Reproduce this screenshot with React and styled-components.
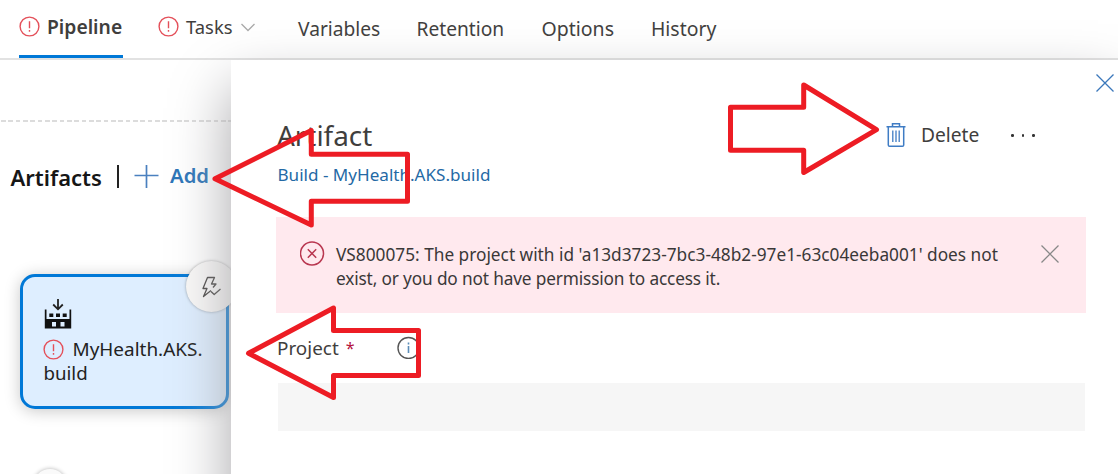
import React from 'react';
import styled, { createGlobalStyle } from 'styled-components';

const GlobalStyle = createGlobalStyle`
  * { box-sizing: border-box; }
  body { margin: 0; background: #fff; }
  svg { display: block; flex: none; }
`;

const Page = styled.div`
  position: relative;
  display: flex;
  flex-direction: column;
  width: 1118px;
  height: 474px;
  overflow: hidden;
  background: #fff;
  color: #3f3e3d;
  font-family: 'Noto Sans', 'Open Sans', sans-serif;
  font-size: 19px;
  line-height: 24px;
  white-space: nowrap;
`;

const TopBar = styled.nav`
  display: flex;
  height: 60px;
  flex: none;
  border-bottom: 2px solid #e2e2e2;
`;

const Tab = styled.div`
  display: flex;
  flex: none;
  height: 58px;
  width: ${(p) => p.$width}px;
  margin-left: ${(p) => p.$gap}px;
  padding-top: ${(p) => p.$top || 17}px;
  font-size: ${(p) => p.$size || 19.2}px;
  font-weight: ${(p) => (p.$active ? 600 : 400)};
  border-bottom: 3px solid ${(p) => (p.$active ? '#0078d7' : 'transparent')};
  svg { margin-top: 1px; }
  span { margin-left: 7px; }
`;

const Chevron = styled.svg`
  && { margin: 8px 0 0 8px; }
`;

const Body = styled.div`
  display: flex;
  flex: 1;
  min-height: 0;
`;

const Canvas = styled.section`
  width: 231px;
  flex: none;
  padding-top: 60px;
`;

const DashedRule = styled.div`
  height: 2px;
  margin-left: 1px;
  background: repeating-linear-gradient(90deg, #dcdcdc 0 4.6px, transparent 4.6px 7.33px);
`;

const ArtifactsHeader = styled.header`
  display: flex;
  align-items: flex-start;
  margin: 43px 0 0 10.5px;
  height: 24px;
`;

const ArtifactsTitle = styled.h2`
  margin: 0;
  width: 106px;
  font-size: 22px;
  font-weight: 600;
  color: #161616;
`;

const Divider = styled.div`
  width: 2px;
  height: 23px;
  background: #222;
`;

const AddButton = styled.div`
  display: flex;
  margin-left: 15.5px;
  font-size: 20.3px;
  font-weight: 600;
  color: #2a74b8;
  span { margin: -2px 0 0 11px; }
`;

const ArtifactCard = styled.article`
  position: relative;
  width: 209.5px;
  height: 135px;
  margin: 85px 0 0 19.5px;
  padding: 22px 0 0 21px;
  border: 3px solid #0078d7;
  border-radius: 15px;
  background: #deeeff;
  box-shadow: 0 2px 16px rgba(0, 0, 0, 0.22);
  color: #222;
`;

const ArtifactName = styled.div`
  display: flex;
  align-items: center;
  margin: 8px 0 0 -1px;
  font-size: 18.95px;
  span { margin-left: 9px; }
`;

const ArtifactNameRest = styled.div`
  font-size: 18.7px;
`;

const TriggerBadge = styled.div`
  position: absolute;
  top: -16px;
  left: 163px;
  width: 51px;
  height: 51px;
  border-radius: 50%;
  background: #faf9f8;
  box-shadow: 0 0 3px rgba(0, 0, 0, 0.35);
  display: grid;
  place-items: center;
`;

const NextBadge = styled.div`
  width: 34px;
  height: 34px;
  margin: 60px 0 0 33px;
  border-radius: 50%;
  background: #fafafa;
  box-shadow: 0 0 4px rgba(0, 0, 0, 0.3);
`;

const Panel = styled.aside`
  position: relative;
  flex: 1;
  display: flex;
  flex-direction: column;
  margin-bottom: -120px;
  padding: 14px 0 0 45px;
  background: #fff;
  box-shadow: 0 28px 56px rgb(166, 165, 168);
`;

const CloseRow = styled.div`
  display: flex;
  justify-content: flex-end;
  padding-right: 4px;
  height: 18px;
`;

const PanelHeader = styled.header`
  display: flex;
  margin-top: 26px;
  height: 35px;
`;

const PanelTitle = styled.h1`
  margin: 0 0 0 1px;
  width: 609px;
  font-size: 27.9px;
  line-height: 35px;
  font-weight: 400;
`;

const DeleteButton = styled.div`
  display: flex;
  width: 125px;
  padding-top: 5px;
  font-size: 19.2px;
  span { margin-left: 15px; }
`;

const MoreDots = styled.div`
  display: flex;
  gap: 8px;
  padding-top: 16px;
  i { width: 2.6px; height: 2.6px; border-radius: 50%; background: #333; }
`;

const BuildLink = styled.div`
  margin: 10px 0 0 1.5px;
  font-size: 17.08px;
  color: #2469a5;
`;

const Alert = styled.div`
  display: flex;
  width: 810px;
  height: 96px;
  margin-top: 30px;
  padding: 24px 27px 0 24px;
  background: #ffe9ee;
  color: #3a3838;
`;

const AlertText = styled.p`
  margin: 2px 0 0 11px;
  flex: 1;
  font-size: 17.25px;
  line-height: 24px;
`;

const AlertLine = styled.span`
  display: block;
  letter-spacing: ${(p) => p.$tracking || 0}px;
`;

const AlertDismiss = styled.div`
  padding-top: 4px;
`;

const FieldLabel = styled.div`
  display: flex;
  margin: 23px 0 0 1px;
  height: 24px;
  font-size: 18.9px;
`;

const Required = styled.span`
  width: 51px;
  margin-left: 7px;
  font-size: 16px;
  color: #b5123e;
`;

const Input = styled.div`
  width: 807px;
  height: 48px;
  margin: 23px 0 0 1.5px;
  background: #f6f6f6;
`;

const Annotations = styled.svg`
  position: absolute;
  inset: 0;
`;

const ErrorIcon = () => (
  <svg width="21" height="21" viewBox="0 0 21 21" fill="none" stroke="#e4505a" strokeWidth="1.4">
    <circle cx="10.5" cy="10.5" r="9.4" />
    <path d="M10.5 5.3v7M10.5 14v1.8" />
  </svg>
);

const Cross = ({ color }) => (
  <svg width="18" height="18" viewBox="0 0 18 18" stroke={color} strokeWidth="1.3">
    <path d="M.5.5l17 17M17.5.5l-17 17" />
  </svg>
);

const PlusIcon = () => (
  <svg width="25" height="24" viewBox="0 0 25 24" stroke="#4a80bf" strokeWidth="1.7">
    <path d="M.5 10.5h24M12.5-1v24" />
  </svg>
);

const BuildIcon = () => (
  <svg width="28" height="30" viewBox="0 0 28 30">
    <path d="M14 0v9.500M9.200 5.500l4.800 4.800 4.800-4.800" fill="none" stroke="#222" strokeWidth="1.800" />
    <path d="M.8 10.500h1.700v9.500h23v-9.500h1.700v19H.8z" fill="#111" />
    <path d="M5.300 14.500h4v3.500h-4zM12 14.500h4v3.500h-4zM18.700 14.500h4v3.500h-4z" fill="#111" />
    <path d="M8 23h4v4.500H8zM16.500 23h4v4.500h-4z" fill="#deeeff" />
  </svg>
);

const TriggerIcon = () => (
  <svg width="22" height="24" viewBox="0 0 22 24" fill="none" stroke="#484644" strokeWidth="1.3" strokeLinejoin="round">
    <path d="M11 15.500L3.500 21.500l3.500-8H3L7.500 2.500h7L11.500 9h4.500l-3 3.500" />
    <path d="M11 16.500l3.200 3 6.300-5.500" />
  </svg>
);

const TrashIcon = () => (
  <svg width="20" height="25" viewBox="0 0 20 25" fill="none" stroke="#3f7cc4" strokeWidth="1.500">
    <path d="M.5 3.700h19M6.500 3.500V.8h7v2.700M2.300 4v18q0 1.300 1.300 1.300h12.800q1.300 0 1.300-1.300V4" />
    <path d="M6.800 7.500V19M10 7.500V19M13.200 7.500V19" strokeWidth="1.300" />
  </svg>
);

const App = () => (
  <Page>
    <GlobalStyle />
    <TopBar>
      <Tab $active $gap={19} $width={104} $top={15} $size={19.3}><ErrorIcon /><span>Pipeline</span></Tab>
      <Tab $gap={35} $width={140} $top={15} $size={18.4}>
        <ErrorIcon /><span>Tasks</span>
        <Chevron width="14" height="9" viewBox="0 0 14 9" fill="none" stroke="#aaa" strokeWidth="1.3"><path d="M.5 1l6.500 6.500L13.500 1" /></Chevron>
      </Tab>
      <Tab $gap={0} $width={82}>Variables</Tab>
      <Tab $gap={36.5} $width={88}>Retention</Tab>
      <Tab $gap={37} $width={73} $size={19.5}>Options</Tab>
      <Tab $gap={36.5} $width={66} $size={19.4}>History</Tab>
    </TopBar>
    <Body>
      <Canvas>
        <DashedRule />
        <ArtifactsHeader>
          <ArtifactsTitle>Artifacts</ArtifactsTitle>
          <Divider />
          <AddButton><PlusIcon /><span>Add</span></AddButton>
        </ArtifactsHeader>
        <ArtifactCard>
          <BuildIcon />
          <ArtifactName><ErrorIcon /><span>MyHealth.AKS.</span></ArtifactName>
          <ArtifactNameRest>build</ArtifactNameRest>
          <TriggerBadge><TriggerIcon /></TriggerBadge>
        </ArtifactCard>
        <NextBadge />
      </Canvas>
      <Panel>
        <CloseRow><Cross color="#3b78bb" /></CloseRow>
        <PanelHeader>
          <PanelTitle>Artifact</PanelTitle>
          <DeleteButton><TrashIcon /><span>Delete</span></DeleteButton>
          <MoreDots><i /><i /><i /></MoreDots>
        </PanelHeader>
        <BuildLink>Build - MyHealth.AKS.build</BuildLink>
        <Alert>
          <svg width="25" height="25" viewBox="0 0 25 25" fill="none" stroke="#b93750" strokeWidth="1.500">
            <circle cx="12" cy="12.500" r="11.500" />
            <path d="M7.800 8.300l8.400 8.400M16.200 8.300l-8.400 8.400" />
          </svg>
          <AlertText>
            <AlertLine>VS800075: The project with id 'a13d3723-7bc3-48b2-97e1-63c04eeba001' does not</AlertLine>
            <AlertLine $tracking={-0.15}>exist, or you do not have permission to access it.</AlertLine>
          </AlertText>
          <AlertDismiss><Cross color="#888" /></AlertDismiss>
        </Alert>
        <FieldLabel>
          Project<Required>*</Required>
          <svg width="23" height="23" viewBox="0 0 23 23" fill="none" stroke="#555" strokeWidth="1.400">
            <circle cx="11.500" cy="12" r="10.500" />
            <path d="M11.500 10v7M11.500 6.500v2" stroke="#5b8db8" strokeWidth="1.600" />
          </svg>
        </FieldLabel>
        <Input />
      </Panel>
    </Body>
    <Annotations width="1118" height="474" viewBox="0 0 1118 474" fill="none" stroke="#ed1c24" strokeWidth="5" strokeLinejoin="round">
      <path d="M215 178.700L311.300 130.500V154.300H407.500V201.300H311.300V225z" />
      <path d="M730.500 107.300H803.700V85L876.500 129.700L803.700 172.500V150.300H730.500z" />
      <path d="M248.500 353.300L333.500 308V330.500H418.500V375.500H333.500V397.500z" />
    </Annotations>
  </Page>
);

export default App;
